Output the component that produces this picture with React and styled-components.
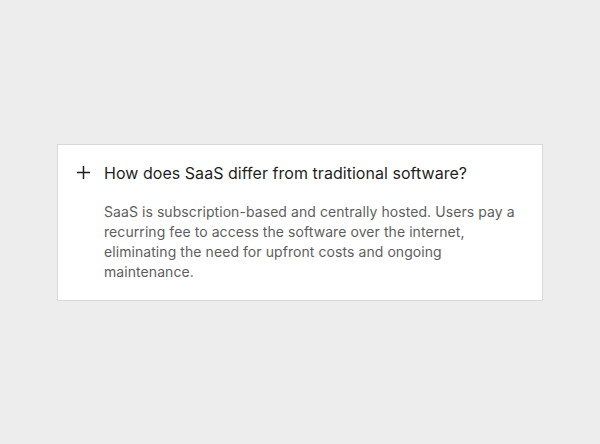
import React from 'react';
import styled, { createGlobalStyle } from 'styled-components';

const GlobalStyle = createGlobalStyle`
  html, body {
    margin: 0;
    padding: 0;
    background: #EDEDED;
  }
  body {
    font-family: Inter, "Noto Sans", sans-serif;
  }
`;

const Page = styled.div`
  width: 600px;
  height: 444px;
  display: flex;
  align-items: center;
  justify-content: center;
`;

const Card = styled.div`
  box-sizing: border-box;
  width: 486px;
  background: #FFF;
  border: 1px solid #D9D9D9;
  padding: 19px 20px 18px 19px;
`;

const Question = styled.div`
  display: flex;
  align-items: center;
  gap: 14px;
  font-size: 16px;
  line-height: 18px;
  letter-spacing: 0.04px;
  color: #1F1F1F;
`;

const Answer = styled.p`
  margin: 20px 0 0 27px;
  font-size: 14px;
  line-height: 20px;
  letter-spacing: 0.07px;
  color: #5E5E5E;
`;

const Plus = () => (
  <svg width="13" height="13" viewBox="0 0 13 13" fill="none">
    <path d="M6.5 0v13M0 6.5h13" stroke="#1F1F1F" strokeWidth="1.5" />
  </svg>
);

const App = () => (
  <Page>
    <GlobalStyle />
    <Card>
      <Question>
        <Plus />
        How does SaaS differ from traditional software?
      </Question>
      <Answer>
        SaaS is subscription-based and centrally hosted. Users pay a recurring fee to access the
        software over the internet, eliminating the need for upfront costs and ongoing maintenance.
      </Answer>
    </Card>
  </Page>
);

export default App;
